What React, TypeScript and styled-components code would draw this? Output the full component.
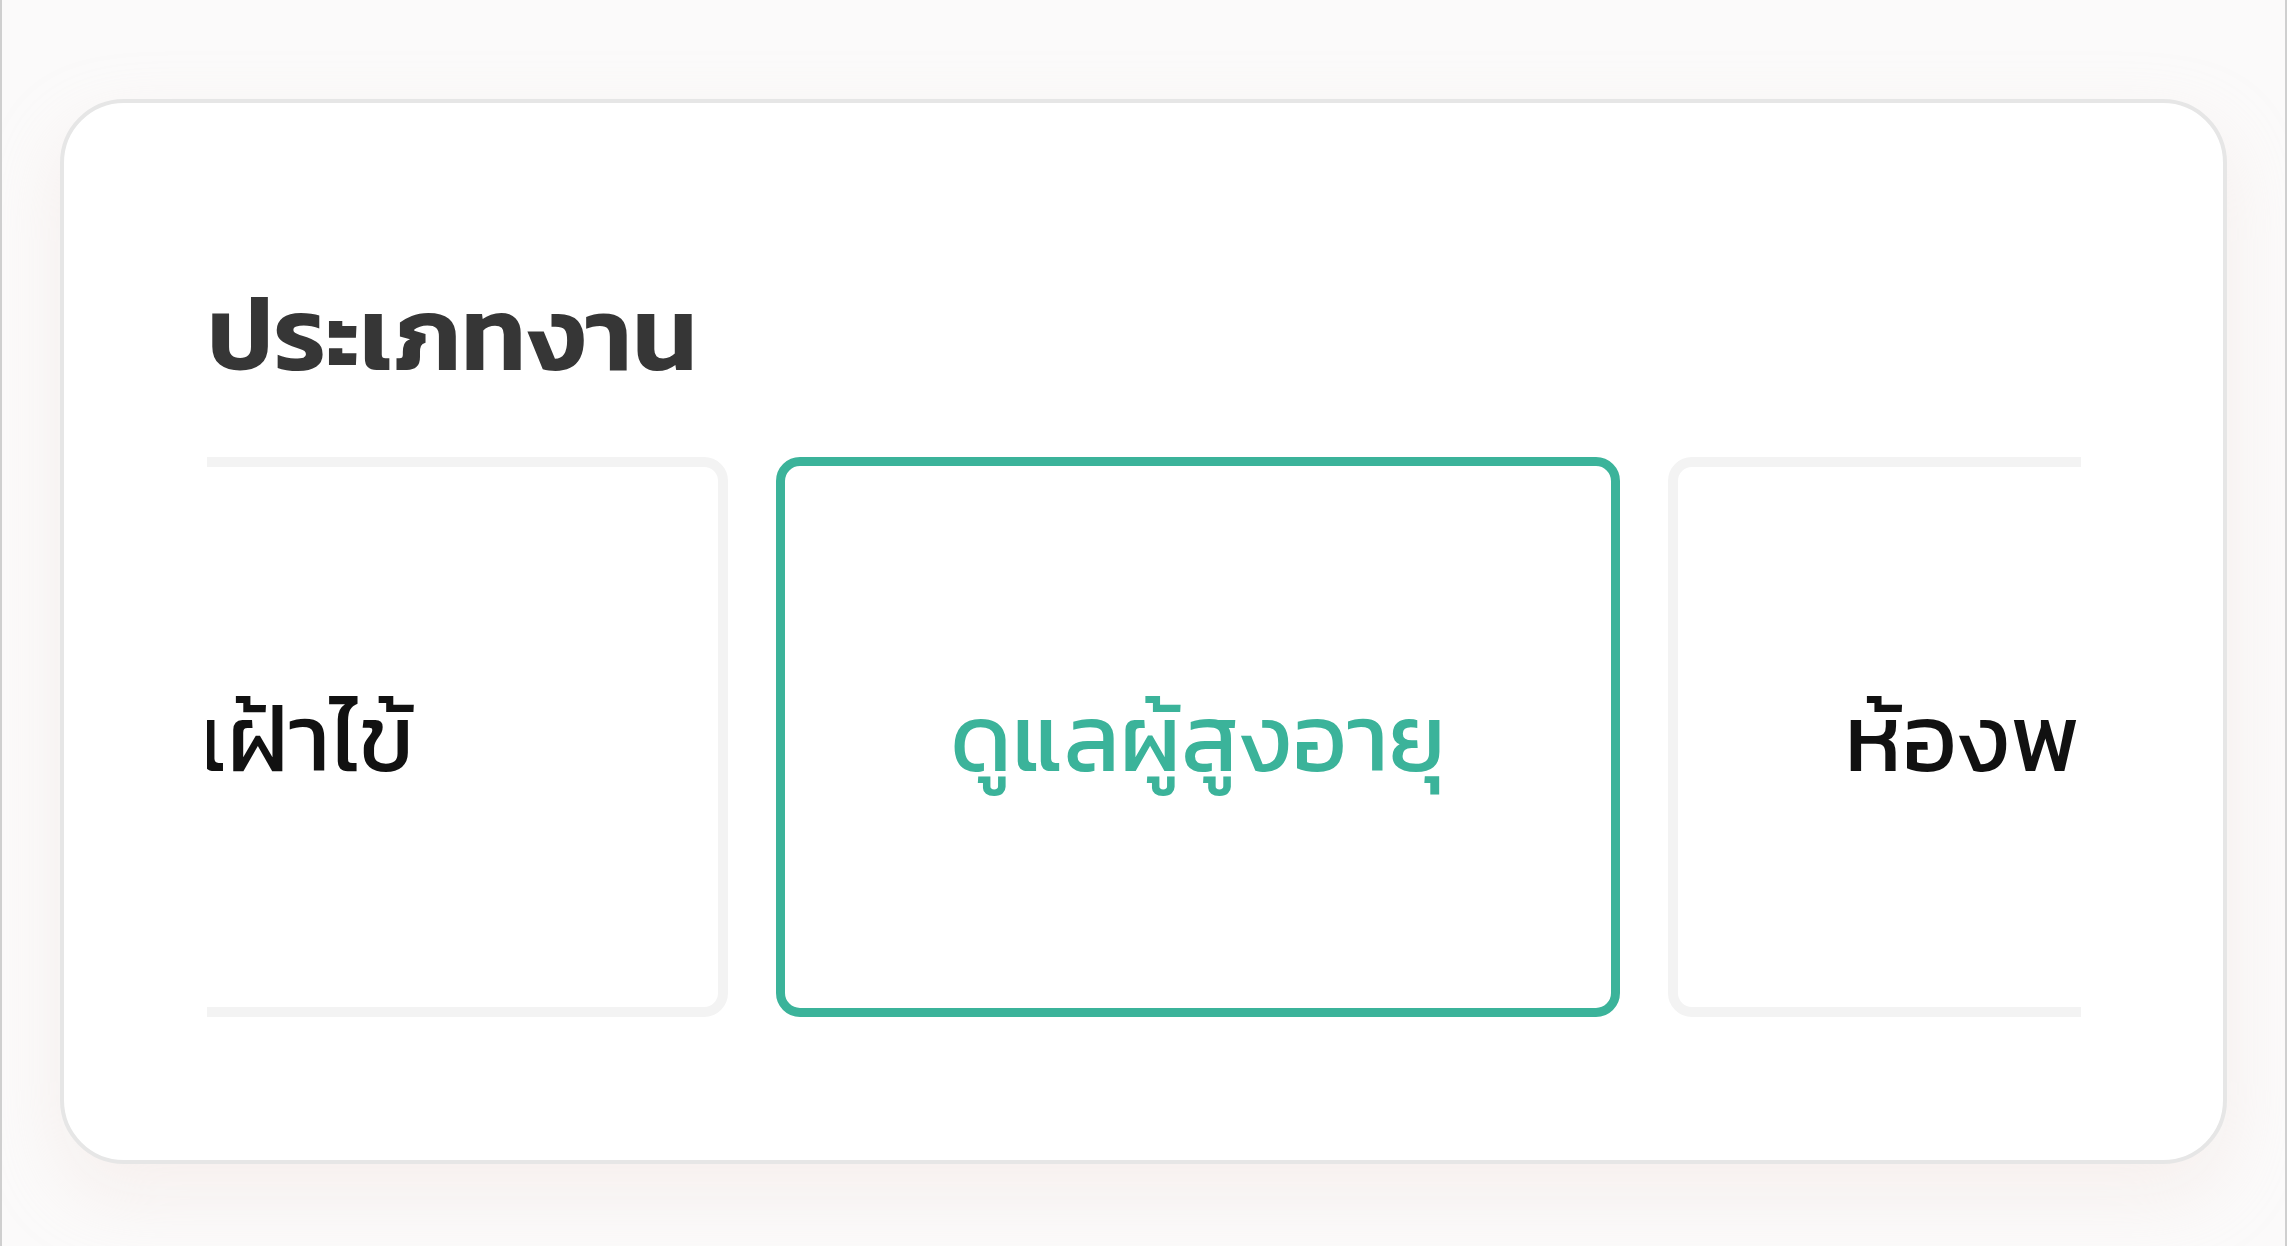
import React from "react";
import styled, { createGlobalStyle } from "styled-components";

const GlobalStyle = createGlobalStyle`
  html, body {
    margin: 0;
    padding: 0;
    background: #fbfafa;
  }
  * {
    box-sizing: border-box;
  }
`;

const Screen = styled.div`
  width: 100vw;
  height: 100vh;
  overflow: hidden;
  border-left: 2px solid #cfcfcf;
  border-right: 2px solid #cfcfcf;
  padding: 99px 58px 0 58px;
  font-family: "Kanit", "Noto Sans Thai", sans-serif;
`;

const Panel = styled.section`
  background: #fff;
  border: 4px solid #e6e6e6;
  border-radius: 64px;
  padding: 179px 142px 143px 143px;
  box-shadow: 0 30px 70px rgba(238, 220, 214, 0.35);
`;

const Heading = styled.h2`
  margin: 0 0 71px 0;
  font-size: 104px;
  line-height: 1;
  font-weight: 600;
  color: #363636;
`;

const Carousel = styled.div`
  overflow: hidden;
`;

const Track = styled.div<{ offset: number }>`
  display: flex;
  gap: 48px;
  margin-left: ${(p) => -p.offset}px;
`;

const Option = styled.button<{ selected?: boolean }>`
  flex: 0 0 844px;
  height: 560px;
  display: flex;
  align-items: center;
  justify-content: center;
  background: #fff;
  border: ${(p) => (p.selected ? "9px solid #3bb39a" : "10px solid #f3f3f3")};
  border-radius: 24px;
  font-family: inherit;
  font-size: 95px;
  line-height: 1;
  font-weight: 400;
  color: ${(p) => (p.selected ? "#3bb39a" : "#111")};
  white-space: nowrap;
  padding: 0;
  cursor: pointer;
`;

const jobTypes = ["ดูแลเด็ก", "เฝ้าไข้", "ดูแลผู้สูงอายุ", "ห้องพยาบาล"];

export default function App() {
  const selected = 2;
  return (
    <>
      <GlobalStyle />
      <Screen>
        <Panel>
          <Heading>ประเภทงาน</Heading>
          <Carousel>
            <Track offset={323 + 892}>
              {jobTypes.map((t, i) => (
                <Option key={t} selected={i === selected}>
                  {t}
                </Option>
              ))}
            </Track>
          </Carousel>
        </Panel>
      </Screen>
    </>
  );
}
